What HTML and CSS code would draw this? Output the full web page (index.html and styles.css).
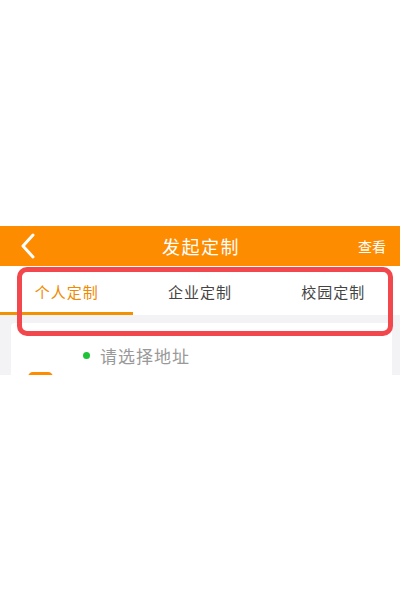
FILE: index.html
```html
<!DOCTYPE html>
<html lang="zh-CN">

<head>
    <meta charset="UTF-8">
    <meta name="viewport" content="width=device-width, initial-scale=1.0">
    <title>发起定制</title>
    <link rel="stylesheet" href="styles.css">
</head>

<body>
    <div class="page">
        <div class="navbar">
            <div class="back">
                <svg width="16" height="26" viewBox="0 0 16 26">
                    <path d="M13 2 L3 13 L13 24" fill="none" stroke="#fff" stroke-width="3" stroke-linecap="round" stroke-linejoin="round" />
                </svg>
            </div>
            <div class="title">发起定制</div>
            <div class="action">查看</div>
        </div>

        <div class="tabs">
            <div class="tab active">个人定制</div>
            <div class="tab">企业定制</div>
            <div class="tab">校园定制</div>
        </div>

        <div class="content">
            <div class="card">
                <div class="address">
                    <span class="dot"></span>
                    <span class="placeholder">请选择地址</span>
                </div>
                <div class="tag"></div>
            </div>
        </div>

        <div class="highlight"></div>
    </div>
</body>

</html>
```

FILE: styles.css
```css
body {
    margin: 0;
    padding: 0;
    background: #fff;
    font-family: "Noto Sans CJK SC", "Noto Sans", sans-serif;
}

.page {
    position: relative;
    margin-top: 226px;
}

.navbar {
    height: 40px;
    background: #fe8c00;
    display: flex;
    align-items: center;
    justify-content: space-between;
    padding: 0 14px 0 20px;
    color: #fff;
}

.back {
    width: 60px;
    display: flex;
    align-items: center;
}

.title {
    font-size: 18px;
    letter-spacing: 1.5px;
    margin-left: -4px;
}

.action {
    width: 60px;
    text-align: right;
    font-size: 14px;
}

.tabs {
    display: flex;
    background: #fff;
    height: 49px;
}

.tab {
    flex: 1;
    display: flex;
    align-items: center;
    justify-content: center;
    font-size: 15px;
    letter-spacing: 1px;
    color: #444;
    border-bottom: 3px solid transparent;
    box-sizing: border-box;
    padding-top: 4px;
}

.tab.active {
    color: #f08a00;
    border-bottom-color: #f39200;
}

.content {
    background: #f3f3f6;
    height: 60px;
    padding: 8px 8px 0 11px;
    overflow: hidden;
    box-sizing: border-box;
}

.card {
    background: #fff;
    height: 80px;
    border-radius: 4px;
    padding: 20px 0 0 17px;
    box-sizing: border-box;
}

.address {
    display: flex;
    align-items: center;
    gap: 10px;
    padding-left: 55px;
}

.dot {
    width: 7px;
    height: 7px;
    border-radius: 50%;
    background: #1ec337;
}

.placeholder {
    font-size: 17px;
    color: #999;
    letter-spacing: 1px;
}

.tag {
    width: 25px;
    height: 20px;
    margin-top: 4px;
    border-radius: 5px;
    background: #fe8c00;
}

.highlight {
    position: absolute;
    left: 17px;
    top: 41px;
    width: 376px;
    height: 69px;
    border: 5px solid #f2474c;
    border-radius: 10px;
    box-sizing: border-box;
}
```
